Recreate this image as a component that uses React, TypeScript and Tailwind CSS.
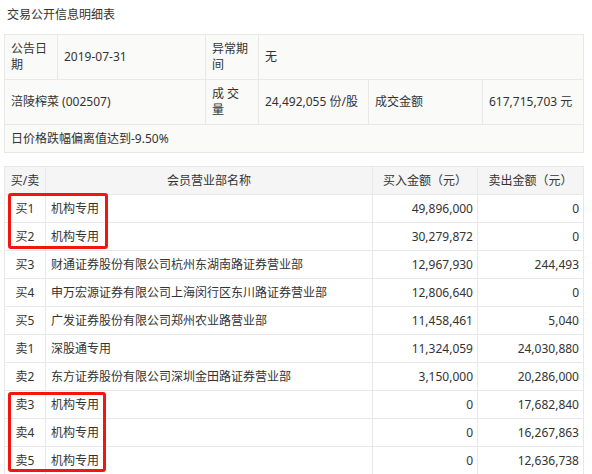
import React from 'react';

const font = { fontFamily: '"Noto Sans", "Noto Sans CJK SC", sans-serif' };

interface Row {
  side: string;
  name: string;
  buy: string;
  sell: string;
}

const rows: Row[] = [
  { side: '买1', name: '机构专用', buy: '49,896,000', sell: '0' },
  { side: '买2', name: '机构专用', buy: '30,279,872', sell: '0' },
  { side: '买3', name: '财通证券股份有限公司杭州东湖南路证券营业部', buy: '12,967,930', sell: '244,493' },
  { side: '买4', name: '申万宏源证券有限公司上海闵行区东川路证券营业部', buy: '12,806,640', sell: '0' },
  { side: '买5', name: '广发证券股份有限公司郑州农业路营业部', buy: '11,458,461', sell: '5,040' },
  { side: '卖1', name: '深股通专用', buy: '11,324,059', sell: '24,030,880' },
  { side: '卖2', name: '东方证券股份有限公司深圳金田路证券营业部', buy: '3,150,000', sell: '20,286,000' },
  { side: '卖3', name: '机构专用', buy: '0', sell: '17,682,840' },
  { side: '卖4', name: '机构专用', buy: '0', sell: '16,267,863' },
  { side: '卖5', name: '机构专用', buy: '0', sell: '12,636,738' },
];

const base = 'border border-[#e8e8e8] leading-[16px] align-middle';
const cell = `${base} px-[6px]`;

export default function App() {
  return (
    <div className="w-[592px] h-[474px] overflow-hidden bg-white text-[12px] text-[#333]" style={font}>
      <div className="pl-[7px] pt-[7px] leading-[16px]">交易公开信息明细表</div>

      {/* summary */}
      <table className="ml-[4px] mt-[11px] w-[579px] table-fixed border-collapse bg-[#fafaf8]">
        <colgroup>
          <col className="w-[53px]" />
          <col className="w-[148px]" />
          <col className="w-[53px]" />
          <col className="w-[110px]" />
          <col className="w-[114px]" />
          <col className="w-[101px]" />
        </colgroup>
        <tbody>
          <tr className="h-[45px]">
            <td className={cell}>公告日期</td>
            <td className={cell}>2019-07-31</td>
            <td className={cell}>异常期间</td>
            <td className={cell} colSpan={3}>无</td>
          </tr>
          <tr className="h-[45px]">
            <td className={cell} colSpan={2}>涪陵榨菜 (002507)</td>
            <td className={cell}>成 交 量</td>
            <td className={cell}>24,492,055 份/股</td>
            <td className={cell}>成交金额</td>
            <td className={cell}>617,715,703 元</td>
          </tr>
          <tr className="h-[28px]">
            <td className={cell} colSpan={6}>日价格跌幅偏离值达到-9.50%</td>
          </tr>
        </tbody>
      </table>

      {/* seats */}
      <div className="relative mt-[13px] ml-[4px] w-[579px]">
        <table className="w-[579px] table-fixed border-collapse">
          <thead>
            <tr className="h-[28px] bg-[#f5f5f5]">
              <th className={`${base} w-[41px] font-normal text-center whitespace-nowrap`}>买/卖</th>
              <th className={`${base} w-[327px] font-normal text-center`}>会员营业部名称</th>
              <th className={`${base} w-[105px] font-normal text-center`}>买入金额（元）</th>
              <th className={`${base} w-[106px] font-normal text-center`}>卖出金额（元）</th>
            </tr>
          </thead>
          <tbody>
            {rows.map((r) => (
              <tr key={r.side} className="h-[28px]">
                <td className={`${base} text-center whitespace-nowrap`}>{r.side}</td>
                <td className={`${base} pl-[5px] whitespace-nowrap`}>{r.name}</td>
                <td className={`${base} pr-[4px] text-right`}>{r.buy}</td>
                <td className={`${base} pr-[4px] text-right`}>{r.sell}</td>
              </tr>
            ))}
          </tbody>
        </table>
        <div className="absolute left-[4px] top-[27px] w-[100px] h-[56px] border-[3px] border-[#f5150f] rounded-[3px]" />
        <div className="absolute left-[4px] top-[226px] w-[98px] h-[80px] border-[3px] border-[#f5150f] rounded-[3px]" />
      </div>
    </div>
  );
}
